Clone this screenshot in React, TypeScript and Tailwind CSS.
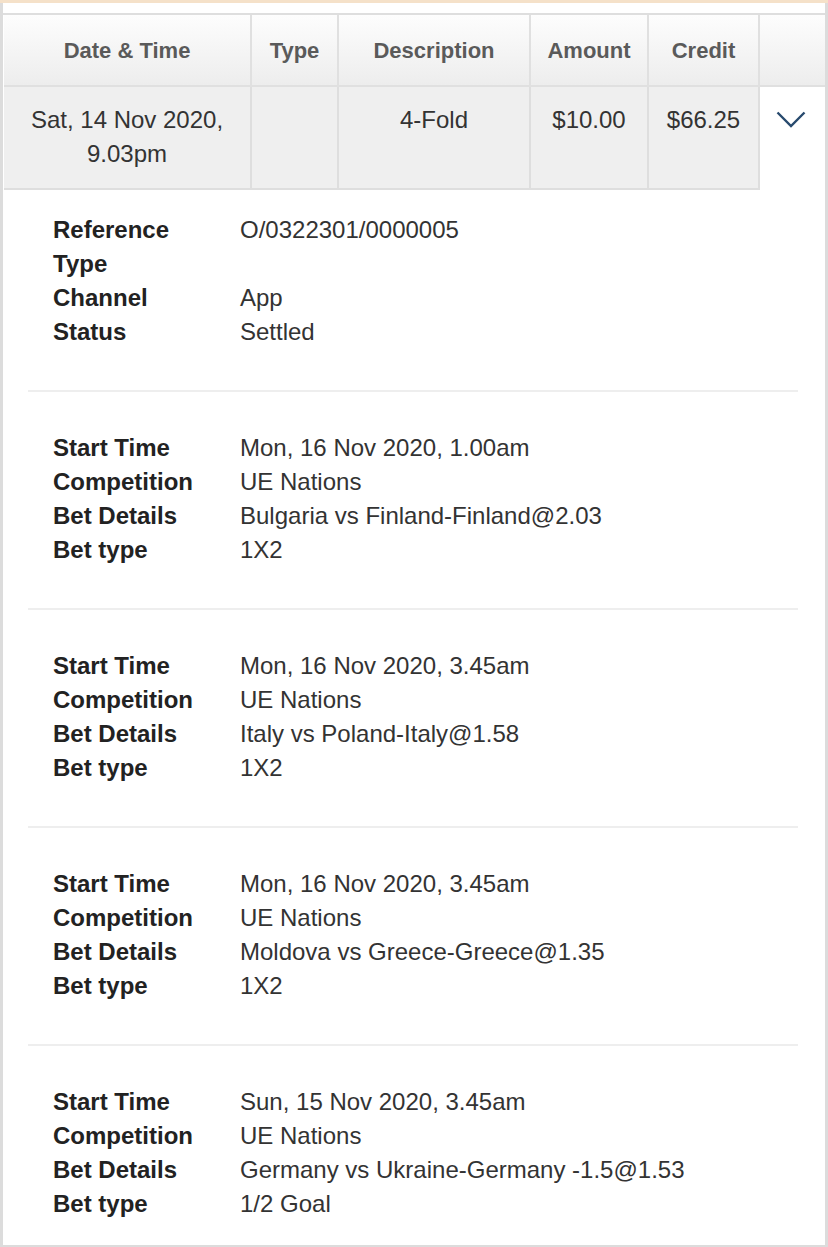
const header = ["Date & Time", "Type", "Description", "Amount", "Credit"]

const summary = [
  ["Reference", "O/0322301/0000005"],
  ["Type", ""],
  ["Channel", "App"],
  ["Status", "Settled"],
]

const legs = [
  ["Mon, 16 Nov 2020, 1.00am", "UE Nations", "Bulgaria vs Finland-Finland@2.03", "1X2"],
  ["Mon, 16 Nov 2020, 3.45am", "UE Nations", "Italy vs Poland-Italy@1.58", "1X2"],
  ["Mon, 16 Nov 2020, 3.45am", "UE Nations", "Moldova vs Greece-Greece@1.35", "1X2"],
  ["Sun, 15 Nov 2020, 3.45am", "UE Nations", "Germany vs Ukraine-Germany -1.5@1.53", "1/2 Goal"],
]

function DetailRows({ rows }: { rows: string[][] }) {
  return (
    <div className="flex flex-col">
      {rows.map(([label, value], i) => (
        <div key={i} className="flex h-[34px] items-center text-[24px] leading-[34px]">
          <div className="w-[187px] shrink-0 font-bold text-[#222]">{label}</div>
          <div className="text-[#333]">{value}</div>
        </div>
      ))}
    </div>
  )
}

function App() {
  const legRows = legs.map(l => [
    ["Start Time", l[0]],
    ["Competition", l[1]],
    ["Bet Details", l[2]],
    ["Bet type", l[3]],
  ])

  return (
    <div className="min-h-[1247px] w-[828px] bg-white" style={{ fontFamily: '"Liberation Sans", Arial, sans-serif' }}>
      <div className="h-[3px] bg-[#f5e1c9]" />
      <div className="h-[1244px] border-x-[3px] border-b-2 border-[#dcdcdc] pt-[10px]">
        <div className="border-t-2 border-[#dedede]">
          <div className="ml-px grid grid-cols-[248px_87px_192px_118px_111px_1fr]">
            {header.map(h => (
              <div key={h} className="flex h-[72px] items-center justify-center border-r-2 border-b-2 border-[#e0e0e0] bg-linear-to-b from-[#fdfdfd] to-[#ededed] text-[22px] font-bold text-[#5a5a5a]">
                {h}
              </div>
            ))}
            <div className="h-[72px] border-b-2 border-[#e0e0e0] bg-linear-to-b from-[#fdfdfd] to-[#ededed]" />

            <div className="h-[103px] border-r-2 border-b-2 border-[#dedede] bg-[#efefef] pt-[16px] text-center text-[24px] leading-[34px] text-[#333]">
              Sat, 14 Nov 2020,<br />9.03pm
            </div>
            <div className="h-[103px] border-r-2 border-b-2 border-[#dedede] bg-[#efefef]" />
            <div className="h-[103px] border-r-2 border-b-2 border-[#dedede] bg-[#efefef] pt-[16px] text-center text-[24px] leading-[34px] text-[#333]">
              4-Fold
            </div>
            <div className="h-[103px] border-r-2 border-b-2 border-[#dedede] bg-[#efefef] pt-[16px] text-center text-[24px] leading-[34px] text-[#333]">
              $10.00
            </div>
            <div className="h-[103px] border-r-2 border-b-2 border-[#dedede] bg-[#efefef] pt-[16px] text-center text-[24px] leading-[34px] text-[#333]">
              $66.25
            </div>
            <div className="flex h-[103px] justify-center pt-[24px] pr-[3px]">
              <svg width="30" height="17" viewBox="0 0 30 17" fill="none">
                <polyline points="1.5,1.5 15,15 28.5,1.5" stroke="#284a6e" strokeWidth="2.4" />
              </svg>
            </div>
          </div>
        </div>

        <div className="mr-[27px] ml-[25px]">
          <div className="px-[25px] pt-[23px] pb-[41px]">
            <DetailRows rows={summary} />
          </div>
          {legRows.map((rows, i) => (
            <div key={i} className="border-t-2 border-[#eeeeee] px-[25px] pt-[39px] pb-[41px]">
              <DetailRows rows={rows} />
            </div>
          ))}
        </div>
      </div>
    </div>
  )
}

export default App
